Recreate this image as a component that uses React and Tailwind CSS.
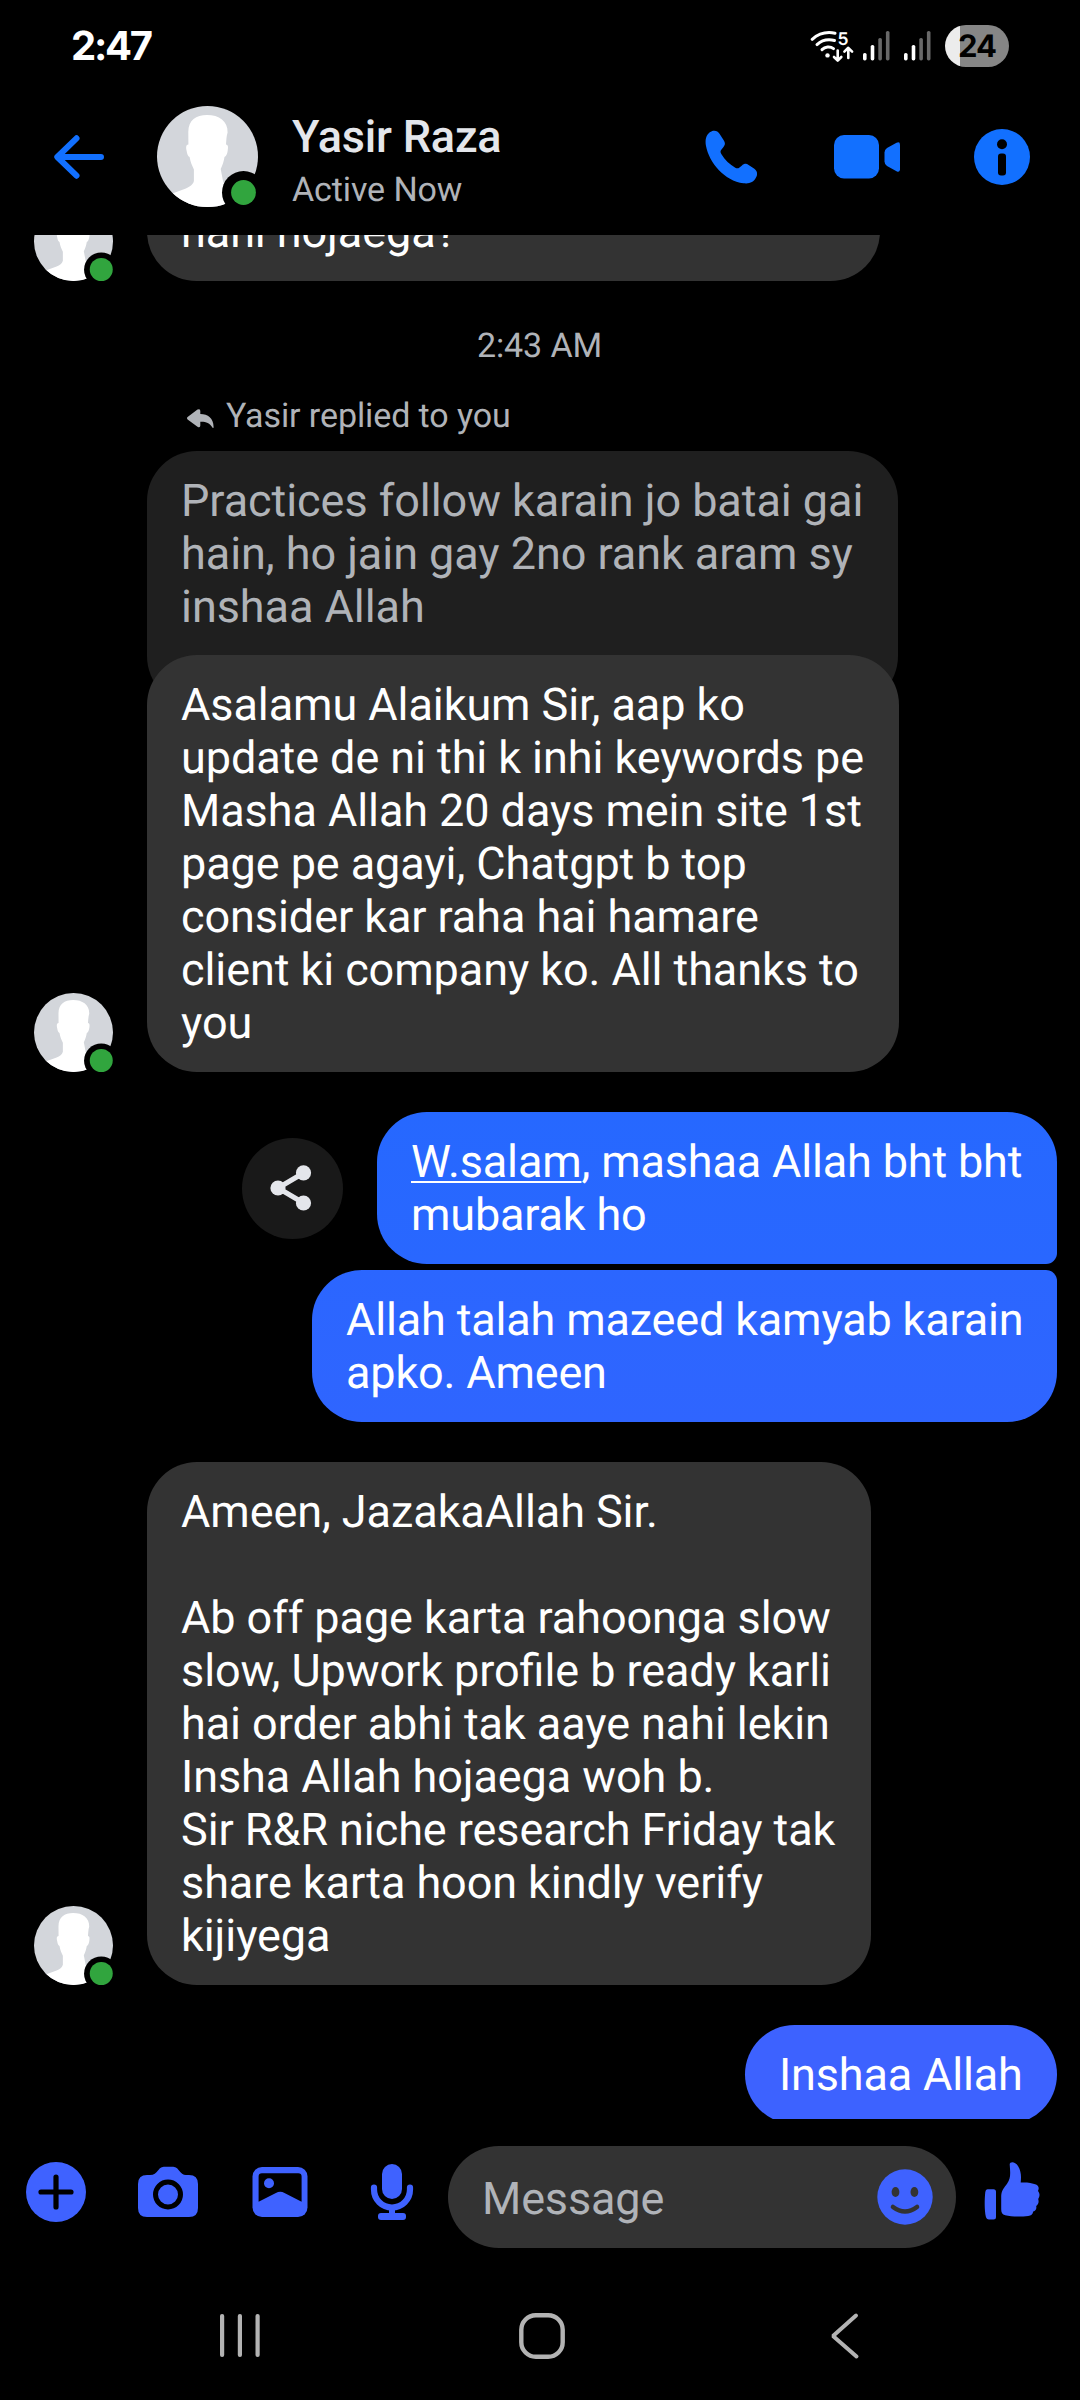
import clsx from "clsx";

const QUOTED = "Practices follow karain jo batai gai\nhain, ho jain gay 2no rank aram sy\ninshaa Allah";

const REPLY =
  "Asalamu Alaikum Sir, aap ko\nupdate de ni thi k inhi keywords pe\nMasha Allah 20 days mein site 1st\npage pe agayi, Chatgpt b top\nconsider kar raha hai hamare\nclient ki company ko. All thanks to\nyou";

const AMEEN =
  "Ameen, JazakaAllah Sir.\n\nAb off page karta rahoonga slow\nslow, Upwork profile b ready karli\nhai order abhi tak aaye nahi lekin\nInsha Allah hojaega woh b.\nSir R&R niche research Friday tak\nshare karta hoon kindly verify\nkijiyega";

export default function App() {
  return (
    <div className="flex h-[2400px] w-[1080px] flex-col overflow-hidden bg-black font-[Roboto,sans-serif] text-white [text-rendering:geometricPrecision]">
      <StatusBar />
      <ChatHeader />
      <Conversation />
      <Composer />
      <NavBar />
    </div>
  );
}

function StatusBar() {
  return (
    <div className="flex h-[78px] shrink-0 items-center pt-3.5 pr-[71px] pl-[71px]">
      <span className="font-[Inter,sans-serif] text-[40px] leading-none font-bold tracking-[-2.3px]">
        2:47
      </span>
      <div className="ml-auto flex items-center">
        <WifiIcon />
        <SignalIcon className="ml-[9px]" />
        <SignalIcon className="ml-[14px]" />
        <div className="ml-[14px] flex h-[42px] w-16 items-center justify-center rounded-full bg-[linear-gradient(90deg,#ececec_15px,#868686_15px)] font-[Inter,sans-serif] text-[31px] leading-none font-bold tracking-[-1px] text-black">
          24
        </div>
      </div>
    </div>
  );
}

function WifiIcon() {
  return (
    <svg width="44" height="34" viewBox="0 0 44 34" fill="none" stroke="#fff" strokeLinecap="round">
      <path d="M2.2 10.3C8.5 4.600 17 2.600 25 4.200" strokeWidth="3" />
      <path d="M7 15.600C11.500 11.400 18 10 24.500 11.500" strokeWidth="3" />
      <path d="M12 20.600c3-3 8-3.600 11.500-1" strokeWidth="3" />
      <circle cx="17.500" cy="26.400" r="2.200" fill="#fff" stroke="none" />
      <path d="M27.700 21.500v9.500M24 28l3.700 3.600 3.600-3.600M38.300 29v-9.500M34.400 22.600l3.900-3.800 3.800 3.800" strokeWidth="2.600" strokeLinejoin="round" />
      <text x="27.500" y="16" fill="#fff" stroke="none" fontSize="17.500" fontWeight="600" fontFamily="Inter, sans-serif">
        5
      </text>
    </svg>
  );
}

function SignalIcon({ className }) {
  return (
    <svg width="27" height="30" viewBox="0 0 27 30" className={className}>
      <rect x="0" y="22" width="3.6" height="7.4" rx="1.6" fill="#fff" />
      <rect x="7.7" y="14" width="3.6" height="15.4" rx="1.6" fill="#fff" />
      <rect x="15.3" y="7" width="3.6" height="22.4" rx="1.6" fill="#686868" />
      <rect x="22.9" y="0" width="3.6" height="29.4" rx="1.6" fill="#686868" />
    </svg>
  );
}

function ChatHeader() {
  return (
    <header className="flex h-[157px] shrink-0 items-center pr-[50px] pl-[51px]">
      <svg width="56" height="50" viewBox="0 0 56 50" fill="none" stroke="#1270ff" strokeWidth="6" strokeLinecap="round" strokeLinejoin="round">
        <path d="M50 25H7M25.5 6.3L6.3 25l19.2 18.7" />
      </svg>
      <Avatar className="ml-[50px] h-[101px] w-[101px]" />
      <div className="ml-[34px] flex flex-col pt-[7px]">
        <h1 className="text-[45px] leading-[52px] font-medium tracking-[-0.2px] whitespace-nowrap text-[#e4e6eb]">
          Yasir Raza
        </h1>
        <p className="mt-[7px] text-[34px] leading-10 tracking-[-0.1px] whitespace-nowrap text-[#b0b3b8]">Active Now</p>
      </div>
      <div className="ml-auto flex items-center text-[#1270ff]">
        <svg width="52" height="54" viewBox="0 0 52 54" fill="currentColor">
          <path d="M1 16C-.5 8.500 2 2.500 8 .8c3-.6 5 .8 6.500 3l4.200 6.400c1.800 2.800 1.500 4.500-.4 7l-2 2.600c-1.200 1.600-.9 2.600 0 4.200 3.500 6 8.500 10.600 14 13.700 1.600.9 2.800.8 4.200-.3l2.500-2c2.400-1.900 4.300-2 6.600-.5l5.400 3.700c3.300 2.500 4 5.500 2 9-2.500 4.800-6.500 6.400-12.500 5.700C19.500 51 4 32.500 1 16z" />
        </svg>
        <svg width="66" height="44" viewBox="0 0 66 44" fill="currentColor" className="ml-[77px]">
          <rect x="0" y="0" width="45" height="43.500" rx="10" />
          <path d="M50.500 17.500q0-3 2.500-4.500l9.500-5.200q3.500-1.600 3.500 1.900v24.600q0 3.500-3.500 1.900L53 31q-2.500-1.500-2.500-4.500z" />
        </svg>
        <svg width="56" height="56" viewBox="0 0 56 56" className="ml-[74px]">
          <circle cx="28" cy="28" r="28" fill="currentColor" />
          <circle cx="28" cy="15.300" r="5" fill="#000" />
          <rect x="24" y="24.500" width="8" height="22" rx="3" fill="#000" />
        </svg>
      </div>
    </header>
  );
}

function Avatar({ className, small }) {
  return (
    <svg viewBox="0 0 101 101" className={clsx("shrink-0", className)}>
      <clipPath id="avatar-clip">
        <circle cx="50.5" cy="50.5" r="50.5" />
      </clipPath>
      <g clipPath="url(#avatar-clip)">
        <rect width="101" height="101" fill="#d3d6db" />
        <path
          d="M50 9C39 9 31.500 14 31.300 26l.1 12.500c-2.600.2-2.500 3-1.800 6.200.5 3 1.200 5.800 3 6.300.8 5 2.500 8.500 4.300 12.500V75c-1 4-4 5.500-8 7.500L14 88v13h75V85c-14-3-22-5-23-10l-2.300-12c2-4 3-7.500 3.800-12 2-1 2.800-3.600 3.200-6.300.5-3.200.7-5.800-1.700-6.200.4-4 .3-8 1.600-12C71 15 62 9 50 9z"
          fill="#fff"
        />
      </g>
      {small ? (
        <>
          <circle cx="86" cy="86.500" r="22" fill="#000" />
          <circle cx="86" cy="86.300" r="14.700" fill="#31a53e" />
        </>
      ) : (
        <>
          <circle cx="86.500" cy="86.500" r="21.500" fill="#000" />
          <circle cx="86.500" cy="86.500" r="12.400" fill="#31a53e" />
        </>
      )}
    </svg>
  );
}

function Bubble({ className, children }) {
  return (
    <div
      className={clsx(
        "rounded-[50px] py-[23px] pl-[34px] text-[45px] leading-[53px] whitespace-pre [font-feature-settings:'liga']",
        className
      )}
    >
      {children}
    </div>
  );
}

function Incoming({ className, children }) {
  return (
    <div className={clsx("flex items-end gap-[34px] tracking-[-0.08px]", className)}>
      <Avatar small className="h-[79px] w-[79px]" />
      {children}
    </div>
  );
}

function Conversation() {
  return (
    <main className="flex h-[1884px] shrink-0 flex-col overflow-hidden pr-[23px] pl-[34px]">
      <Incoming className="-mt-[53px]">
        <Bubble className="w-[733px] bg-[#333]">nahi hojaega?</Bubble>
      </Incoming>

      <p className="mt-[45px] ml-[-12px] text-center text-[34px] leading-10 tracking-[-0.1px] text-[#b0b3b8]">2:43 AM</p>

      <div className="mt-[30px] ml-[153px] flex items-center text-[34px] leading-10 tracking-[-0.1px] text-[#b0b3b8]">
        <svg width="27" height="20" viewBox="0 0 27 20" fill="currentColor" className="mt-[5px] mr-3">
          <path d="M.6 8L10.500.6Q13.300-.8 13.300 2v3C21 5.200 26.500 9 26.600 18q0 1.800-1.200.4C22.500 14 19 12.600 13.300 12.800v3.600q0 2.800-2.800 1.300L.6 10.400Q-.6 9.200.6 8z" />
        </svg>
        Yasir replied to you
      </div>

      <div className="mt-[15px] ml-[113px] w-[751px]">
        <Bubble className="bg-[#1f1f1f] pb-[73px] tracking-[-0.06px] text-[#b0b3b8]">{QUOTED}</Bubble>
      </div>
      <Incoming className="relative -mt-[51px]">
        <Bubble className="w-[752px] bg-[#333]">{REPLY}</Bubble>
      </Incoming>

      <div className="mt-10 flex items-center justify-end gap-[34px]">
        <button className="flex h-[101px] w-[101px] items-center justify-center rounded-full bg-[#191919] pr-1">
          <svg width="42" height="46" viewBox="0 0 42 46" fill="#e4e6eb" stroke="#e4e6eb">
            <path d="M33.500 8L8 23l25.500 15" fill="none" strokeWidth="5" />
            <circle cx="33.500" cy="7.800" r="7.600" stroke="none" />
            <circle cx="8" cy="23" r="7.600" stroke="none" />
            <circle cx="33.500" cy="38" r="7.600" stroke="none" />
          </svg>
        </button>
        <Bubble className="w-[680px] rounded-br-[11px] bg-linear-to-b from-[#2668ff] to-[#2967ff] tracking-[-0.17px]">
          <span className="underline decoration-2 underline-offset-[4px] [text-decoration-skip-ink:none]">W.salam</span>
          {", mashaa Allah bht bht\nmubarak ho"}
        </Bubble>
      </div>
      <Bubble className="mt-1.5 w-[745px] self-end rounded-tr-[11px] bg-linear-to-b from-[#2b66ff] to-[#2f65ff] tracking-[-0.17px]">
        {"Allah talah mazeed kamyab karain\napko. Ameen"}
      </Bubble>

      <Incoming className="mt-10">
        <Bubble className="w-[724px] bg-[#333]">{AMEEN}</Bubble>
      </Incoming>

      <Bubble className="mt-10 w-[312px] self-end bg-[#3d62ff] tracking-[-0.17px]">Inshaa Allah</Bubble>
    </main>
  );
}

function Composer() {
  return (
    <div className="flex h-[153px] shrink-0 items-start pt-[27px] pr-10 pl-[26px] text-[#3f62ff]">
      <div className="flex h-[92px] items-center gap-[52px]">
        <svg width="60" height="60" viewBox="0 0 60 60">
          <circle cx="30" cy="30" r="30" fill="currentColor" />
          <path d="M30 15v30M15 30h30" stroke="#000" strokeWidth="5.200" strokeLinecap="round" />
        </svg>
        <svg width="60" height="60" viewBox="0 0 60 60">
          <path
            d="M0 22q0-9 9-9h3c4 0 6-2 8-4.500 2.500-3 3.500-3.700 7-3.700h7c3.500 0 4.500.7 7 3.700C43 11 45 13 48 13h3q9 0 9 9v24q0 9-9 9H9q-9 0-9-9z"
            fill="currentColor"
          />
          <circle cx="30" cy="32.500" r="12.500" fill="none" stroke="#000" strokeWidth="5" />
        </svg>
        <svg width="60" height="60" viewBox="0 0 60 60">
          <rect x="2.500" y="5" width="55" height="50" rx="9.500" fill="currentColor" />
          <path d="M8.600 39.700V14.500q0-3.300 3.300-3.300h36.400q3.300 0 3.300 3.300v25.200L34.500 31q-4.300-2.300-8.600 0z" fill="#000" />
          <circle cx="19" cy="21.300" r="5" fill="currentColor" />
        </svg>
        <svg width="60" height="60" viewBox="0 0 60 60" fill="currentColor">
          <rect x="20" y="2" width="20" height="35" rx="10" />
          <path d="M12 25.500v2c0 10 8 18 18 18s18-8 18-18v-2" fill="none" stroke="currentColor" strokeWidth="6.200" strokeLinecap="round" />
          <rect x="27" y="44" width="6" height="9" />
          <rect x="16" y="51" width="28" height="7" rx="3" />
        </svg>
      </div>
      <div className="ml-[26px] flex h-[102px] w-[508px] items-center justify-between rounded-full bg-[#333] pr-[23px] pl-[34px]">
        <span className="pt-0.5 text-[45px] leading-[53px] tracking-[-0.15px] text-[#b0b3b8]">Message</span>
        <svg width="56" height="56" viewBox="0 0 56 56">
          <circle cx="28" cy="28" r="27.700" fill="currentColor" />
          <ellipse cx="18.500" cy="23" rx="3.900" ry="5.100" fill="#333" />
          <ellipse cx="37.400" cy="23" rx="3.900" ry="5.100" fill="#333" />
          <path d="M16 38q12 9 24 0" fill="none" stroke="#333" strokeWidth="4.600" strokeLinecap="round" />
        </svg>
      </div>
      <svg width="56" height="58" viewBox="0 0 56 58" fill="currentColor" className="mt-4 ml-7">
        <path d="M3.500 27.300h6q2.500 0 2.500 2.500v25.200q0 2.500-2.500 2.500H5Q2.500 57.500 1.800 54.500C.5 48 .4 38 1.300 30q.3-2.700 2.200-2.700z" />
        <path d="M25.700 2.500C25.700-.5 31-.8 34 4c3.300 5.500 3.300 10.500 2.700 16.500 6-.3 11 .3 15.300 2 3 1.500 3.200 4 2 6.500 2 2.500 2 5.500.2 8 .8 3 .5 5-2 7 .6 3-.5 4.800-3 5.500-.6 3-2 4-5 4.500-8 1-17 .7-23-.7-3-.8-4-2.800-4-6V34c.3-6 3.200-8.500 6-12.500 3.500-5 3.300-9 2.500-19z" />
      </svg>
    </div>
  );
}

function NavBar() {
  return (
    <nav className="flex h-32 items-center pl-[220px]">
      <svg width="40" height="44" viewBox="0 0 40 44" fill="#b3b3b3">
        <rect x="0" y="0" width="4.200" height="43" rx="2" />
        <rect x="17.800" y="0" width="4.200" height="43" rx="2" />
        <rect x="35.500" y="0" width="4.200" height="43" rx="2" />
      </svg>
      <svg width="46" height="46" viewBox="0 0 46 46" fill="none" stroke="#b3b3b3" strokeWidth="4.400" className="ml-[259px]">
        <rect x="2.300" y="2.300" width="41.400" height="41.400" rx="14.500" />
      </svg>
      <svg width="30" height="48" viewBox="0 0 30 48" fill="none" stroke="#b3b3b3" strokeWidth="4" strokeLinecap="round" strokeLinejoin="bevel" className="ml-[265px]">
        <path d="M26 3.500L3 24l23.500 20.500" />
      </svg>
    </nav>
  );
}
